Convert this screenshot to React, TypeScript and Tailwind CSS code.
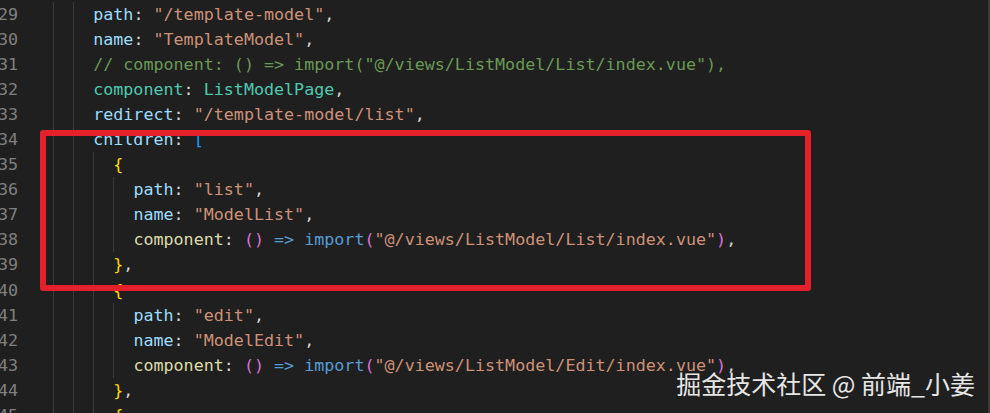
import React from 'react';

type Tok = [string, string];

interface Line {
  no: number;
  indent: number; // indent levels (2 spaces each)
  toks: Tok[];
}

const C = {
  key: 'text-[#9cdcfe]',
  punc: 'text-[#d4d4d4]',
  str: 'text-[#ce9178]',
  comment: 'text-[#6a9955]',
  type: 'text-[#4ec9b0]',
  fn: 'text-[#dcdcaa]',
  kw: 'text-[#569cd6]',
  br1: 'text-[#ffd700]',
  br2: 'text-[#da70d6]',
  br3: 'text-[#179fff]',
};

const importTail = (file: string): Tok[] => [
  [C.fn, 'component'],
  [C.punc, ': '],
  [C.br2, '()'],
  [C.punc, ' '],
  [C.kw, '=>'],
  [C.punc, ' '],
  [C.kw, 'import'],
  [C.br2, '('],
  [C.str, `"@/views/ListModel/${file}/index.vue"`],
  [C.br2, ')'],
  [C.punc, ','],
];

const lines: Line[] = [
  { no: 29, indent: 2, toks: [[C.key, 'path'], [C.punc, ': '], [C.str, '"/template-model"'], [C.punc, ',']] },
  { no: 30, indent: 2, toks: [[C.key, 'name'], [C.punc, ': '], [C.str, '"TemplateModel"'], [C.punc, ',']] },
  { no: 31, indent: 2, toks: [[C.comment, '// component: () => import("@/views/ListModel/List/index.vue"),']] },
  { no: 32, indent: 2, toks: [[C.type, 'component'], [C.punc, ': '], [C.type, 'ListModelPage'], [C.punc, ',']] },
  { no: 33, indent: 2, toks: [[C.key, 'redirect'], [C.punc, ': '], [C.str, '"/template-model/list"'], [C.punc, ',']] },
  { no: 34, indent: 2, toks: [[C.key, 'children'], [C.punc, ': '], [C.br3, '[']] },
  { no: 35, indent: 3, toks: [[C.br1, '{']] },
  { no: 36, indent: 4, toks: [[C.key, 'path'], [C.punc, ': '], [C.str, '"list"'], [C.punc, ',']] },
  { no: 37, indent: 4, toks: [[C.key, 'name'], [C.punc, ': '], [C.str, '"ModelList"'], [C.punc, ',']] },
  { no: 38, indent: 4, toks: importTail('List') },
  { no: 39, indent: 3, toks: [[C.br1, '}'], [C.punc, ',']] },
  { no: 40, indent: 3, toks: [[C.br1, '{']] },
  { no: 41, indent: 4, toks: [[C.key, 'path'], [C.punc, ': '], [C.str, '"edit"'], [C.punc, ',']] },
  { no: 42, indent: 4, toks: [[C.key, 'name'], [C.punc, ': '], [C.str, '"ModelEdit"'], [C.punc, ',']] },
  { no: 43, indent: 4, toks: importTail('Edit') },
  { no: 44, indent: 3, toks: [[C.br1, '}'], [C.punc, ',']] },
  { no: 45, indent: 3, toks: [[C.br1, '{']] },
];

const CodeLine = ({ line }: { line: Line }) => (
  <div className="flex h-[25.1px] items-center whitespace-pre">
    {/* gutter, first digit is clipped by the screenshot edge */}
    <div className="flex w-[18px] shrink-0 justify-end overflow-hidden text-[#808080]">
      <span>{line.no}</span>
    </div>
    <div className="w-[35px] shrink-0" />
    {Array.from({ length: line.indent }).map((_, i) => (
      <span key={i} className="h-full w-[20.1px] shrink-0 border-l border-[#3b3b3b]" />
    ))}
    <span>
      {line.toks.map(([cls, text], i) => (
        <span key={i} className={cls}>
          {text}
        </span>
      ))}
    </span>
  </div>
);

export default function App() {
  return (
    <div className="relative flex h-[413px] w-[990px] overflow-hidden bg-[#1f1f1f]">
      <div
        className="flex-1 pt-[1.5px] text-[16.7px]"
        style={{ fontFamily: '"DejaVu Sans Mono", "Liberation Mono", monospace' }}
      >
        {lines.map((l) => (
          <CodeLine key={l.no} line={l} />
        ))}
      </div>
      <div className="w-[2px] shrink-0 bg-[#3a3a3a]" />

      {/* red annotation box */}
      <div className="absolute left-[40px] top-[130px] h-[161px] w-[771px] rounded-[3px] border-[6px] border-[#e4202a]" />

      {/* watermark */}
      <div
        className="absolute right-[15px] top-[371px] whitespace-nowrap text-[25px] leading-[25px] text-[#e6e6e6]"
        style={{ fontFamily: '"Noto Sans CJK SC", "Noto Sans", sans-serif' }}
      >
        掘金技术社区 @ 前端_小姜
      </div>
    </div>
  );
}
